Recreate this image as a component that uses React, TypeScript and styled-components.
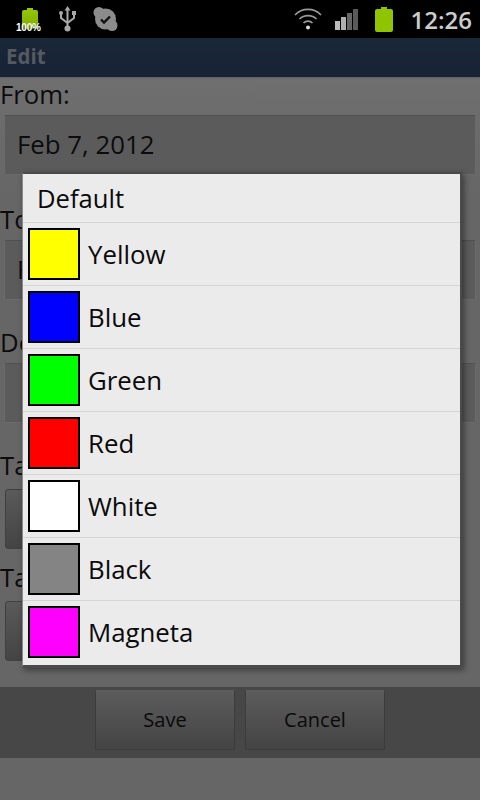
import React from 'react';
import styled, {createGlobalStyle} from "styled-components";

const GlobalStyle = createGlobalStyle`
  html, body {
    margin: 0;
    padding: 0;
    background: #666;
  }
`;

const Phone = styled.div`
  position: relative;
  width: 480px;
  height: 800px;
  overflow: hidden;
  display: flex;
  flex-direction: column;
  font-family: "Open Sans", "Noto Sans", sans-serif;
  background: #666;
`;

const StatusBar = styled.div`
  height: 38px;
  flex: none;
  background: #000;
  display: flex;
  align-items: center;
  padding: 0 8px 0 16px;
  box-sizing: border-box;
`;

const StatusLeft = styled.div`
  display: flex;
  align-items: center;
  flex: 1;
`;

const StatusRight = styled.div`
  display: flex;
  align-items: center;
`;

const StatusIcon = styled.svg<{$left?: number}>`
  flex: none;
  margin-left: ${p => p.$left || 0}px;
`;

const BatteryWrap = styled.div`
  position: relative;
  width: 27px;
  height: 32px;
  display: flex;
  justify-content: center;
  padding-top: 5px;
  box-sizing: border-box;
`;

const BatteryLabel = styled.span`
  position: absolute;
  bottom: 2px;
  left: 0;
  font-family: "Liberation Sans", sans-serif;
  font-size: 10px;
  font-weight: bold;
  letter-spacing: -0.2px;
  color: #fff;
`;

const Clock = styled.span`
  font-size: 24px;
  font-weight: 600;
  color: #ccc;
  margin-left: 18px;
`;

const TitleBar = styled.div`
  height: 39px;
  flex: none;
  background: linear-gradient(#1a2739, #172334);
  display: flex;
  align-items: center;
  padding: 0 0 3px 6px;
  box-sizing: border-box;
  font-size: 20.5px;
  font-weight: bold;
  color: #565a60;
`;

const Form = styled.div`
  flex: 1;
  padding: 0 4px;
  background: linear-gradient(#5f5f5f, #6f6f6f 2px, #666 120px);
`;

const Label = styled.div<{$top?: number}>`
  height: 38px;
  line-height: 35px;
  margin: ${p => p.$top || 0}px 0 0 -4px;
  font-size: 25.7px;
  color: #0c0c0c;
`;

const Field = styled.div`
  height: 60px;
  box-sizing: border-box;
  padding-left: 12px;
  line-height: 56px;
  font-size: 25.8px;
  color: #0c0c0c;
  background: #5b5b5b;
  border: 1px solid #6b6b6b;
  border-top-color: #505050;
  border-radius: 2px;
`;

const PickerStub = styled.div<{$top?: number}>`
  height: 60px;
  width: 60px;
  box-sizing: border-box;
  margin: ${p => p.$top || 0}px 0 0 1px;
  background: linear-gradient(#5a5a5a, #444);
  border: 1px solid #404040;
  border-radius: 3px;
`;

const BottomBar = styled.div`
  height: 71px;
  flex: none;
  background: #474747;
  display: flex;
  justify-content: center;
  gap: 10px;
  padding-top: 3px;
  box-sizing: border-box;
`;

const BarButton = styled.div`
  width: 140px;
  height: 60px;
  box-sizing: border-box;
  display: flex;
  align-items: center;
  justify-content: center;
  padding-bottom: 2px;
  font-size: 20px;
  color: #0a0a0a;
  background: linear-gradient(#5c5c5c, #444);
  border: 1px solid #3c3c3c;
  border-top-color: #5e5e5e;
`;

const BottomFill = styled.div`
  height: 42px;
  flex: none;
  background: #666;
`;

const Dialog = styled.div`
  position: absolute;
  left: 22px;
  top: 172px;
  width: 440px;
  box-sizing: border-box;
  padding-bottom: 2px;
  background: #ebebeb;
  border-style: solid;
  border-color: #4a4a4a;
  border-width: 2px 2px 3px 1px;
  border-left-color: #8a8a8a;
  box-shadow: 2px 2px 6px rgba(0, 0, 0, 0.45);
`;

const DefaultRow = styled.div`
  height: 48px;
  padding-left: 14px;
  box-sizing: border-box;
  display: flex;
  align-items: center;
  font-size: 25.6px;
  color: #0a0a0a;
`;

const ColorRow = styled.div`
  height: 63px;
  box-sizing: border-box;
  border-top: 1px solid #d4d4d4;
  display: flex;
  align-items: center;
  padding-left: 5px;
  gap: 8px;
  font-size: 25.8px;
  color: #0a0a0a;
`;

const Swatch = styled.div<{$color: string}>`
  width: 52px;
  height: 52px;
  flex: none;
  box-sizing: border-box;
  border: 2px solid #000;
  background: ${p => p.$color};
`;

const ColorName = styled.span`
  padding-bottom: 1px;
`;

const colors = [
    {name: 'Yellow', value: '#ffff00'},
    {name: 'Blue', value: '#0000ff'},
    {name: 'Green', value: '#00ff00'},
    {name: 'Red', value: '#ff0000'},
    {name: 'White', value: '#ffffff'},
    {name: 'Black', value: '#848484'},
    {name: 'Magneta', value: '#ff00ff'},
];

const App = () => {
    return (
        <Phone>
            <GlobalStyle/>
            <StatusBar>
                <StatusLeft>
                    <BatteryWrap>
                        <svg width="16" height="21" viewBox="0 0 16 21">
                            <defs>
                                <linearGradient id="chargeFade" x1="0" y1="0" x2="0" y2="1">
                                    <stop offset="0" stopColor="#95c90a"/>
                                    <stop offset="0.7" stopColor="#86b400"/>
                                    <stop offset="1" stopColor="#4f6a00"/>
                                </linearGradient>
                            </defs>
                            <path d="M5 0h6v2h3a2 2 0 0 1 2 2v17H0V4a2 2 0 0 1 2-2h3z" fill="url(#chargeFade)"/>
                        </svg>
                        <BatteryLabel>100%</BatteryLabel>
                    </BatteryWrap>
                    <StatusIcon $left={16} width="17" height="26" viewBox="0 0 17 26" fill="none" stroke="#a8a8a8" strokeWidth="2">
                        <path d="M8.5 3v19M2 8v4l6.5 5 6.5-5V8"/>
                        <path d="M8.5 0l-3 4.5h6z" fill="#a8a8a8" stroke="none"/>
                        <circle cx="8.5" cy="22.5" r="3" fill="#a8a8a8" stroke="none"/>
                        <circle cx="2" cy="7" r="2" fill="#a8a8a8" stroke="none"/>
                        <rect x="13" y="5" width="4" height="4" fill="#a8a8a8" stroke="none"/>
                    </StatusIcon>
                    <StatusIcon $left={17} width="25" height="24" viewBox="0 0 25 24">
                        <circle cx="12.5" cy="12" r="10.5" fill="#8c8c8c"/>
                        <circle cx="6" cy="5.5" r="5.5" fill="#8c8c8c"/>
                        <circle cx="19" cy="18.5" r="5.5" fill="#8c8c8c"/>
                        <path d="M8 12.5l3 3 6-6" fill="none" stroke="#111" strokeWidth="2.4"/>
                    </StatusIcon>
                </StatusLeft>
                <StatusRight>
                    <StatusIcon width="28" height="22" viewBox="0 0 28 22" fill="none" stroke="#9a9a9a" strokeWidth="1.6">
                        <path d="M1 7c7-7.500 19-7.500 26 0"/>
                        <path d="M5.500 11c4.500-4.500 12.500-4.500 17 0"/>
                        <path d="M9.500 15c2.500-2.500 6.500-2.500 9 0"/>
                        <circle cx="14" cy="19.500" r="2" fill="#ddd" stroke="none"/>
                    </StatusIcon>
                    <StatusIcon $left={13} width="23" height="21" viewBox="0 0 23 21">
                        <rect x="0" y="12" width="5" height="9" fill="#bbb"/>
                        <rect x="6" y="8" width="5" height="13" fill="#b0b0b0"/>
                        <rect x="12" y="4" width="5" height="17" fill="#666"/>
                        <rect x="18" y="0" width="5" height="21" fill="#5a5a5a"/>
                    </StatusIcon>
                    <StatusIcon $left={17} width="18" height="25" viewBox="0 0 18 25">
                        <path d="M6 0h6v2h4a2 2 0 0 1 2 2v19a2 2 0 0 1-2 2H2a2 2 0 0 1-2-2V4a2 2 0 0 1 2-2h4z" fill="#8fc400"/>
                    </StatusIcon>
                    <Clock>12:26</Clock>
                </StatusRight>
            </StatusBar>
            <TitleBar>Edit</TitleBar>
            <Form>
                <Label>From:</Label>
                <Field>Feb 7, 2012</Field>
                <Label $top={27}>To</Label>
                <Field>F</Field>
                <Label $top={25}>De</Label>
                <Field/>
                <Label $top={25}>Ta</Label>
                <PickerStub $top={3}/>
                <Label $top={11}>Ta</Label>
                <PickerStub $top={3}/>
            </Form>
            <BottomBar>
                <BarButton>Save</BarButton>
                <BarButton>Cancel</BarButton>
            </BottomBar>
            <BottomFill/>
            <Dialog>
                <DefaultRow>Default</DefaultRow>
                {colors.map(c => (
                    <ColorRow key={c.name}>
                        <Swatch $color={c.value}/>
                        <ColorName>{c.name}</ColorName>
                    </ColorRow>
                ))}
            </Dialog>
        </Phone>
    );
};

export default App;
